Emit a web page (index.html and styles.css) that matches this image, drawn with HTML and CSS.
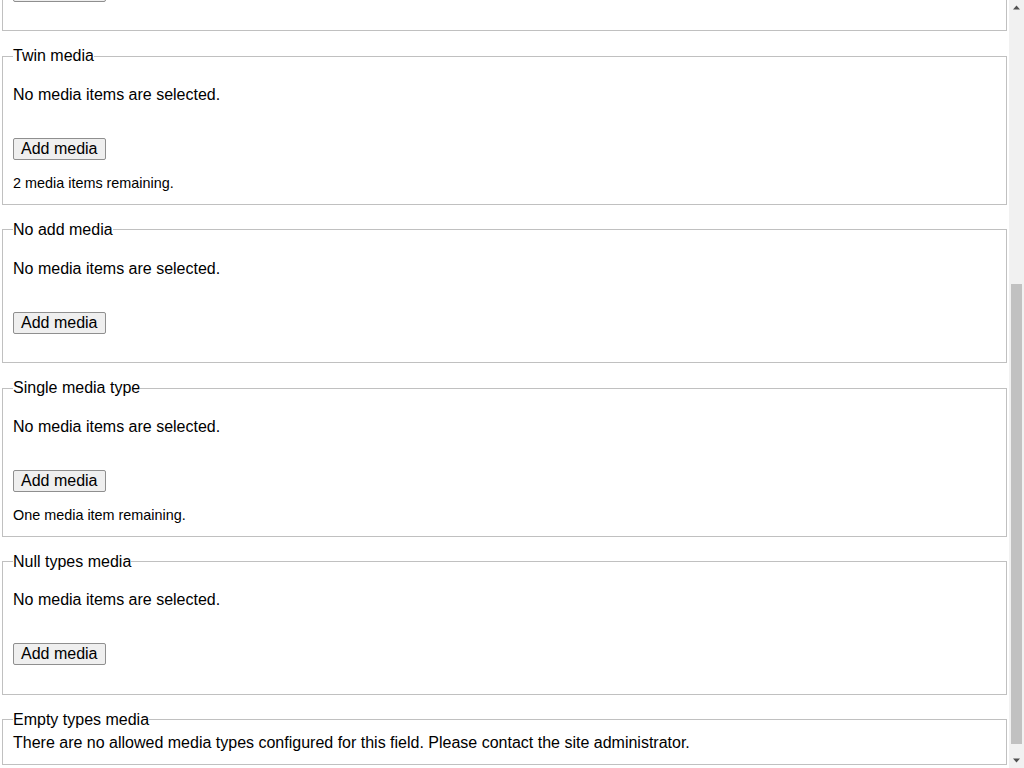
FILE: index.html
```html
<!DOCTYPE html>
<html lang="en">
<head>
<meta charset="utf-8">
<title>Media library widget</title>
<link rel="stylesheet" href="styles.css">
</head>
<body>
<form class="page">
  <div class="form-item">
    <fieldset class="field">
      <legend>Unlimited media</legend>
      <p class="empty">No media items are selected.</p>
      <div class="actions"><button type="button" class="btn">Add media</button></div>
    </fieldset>
  </div>
  <div class="form-item">
    <fieldset class="field">
      <legend>Unlimited media</legend>
      <p class="empty">No media items are selected.</p>
      <div class="actions"><button type="button" class="btn">Add media</button></div>
    </fieldset>
  </div>
  <div class="form-item">
    <fieldset class="field">
      <legend>Other media</legend>
      <p class="empty">No media items are selected.</p>
      <div class="actions"><button type="button" class="btn">Add media</button></div>
    </fieldset>
  </div>
  <div class="form-item">
    <fieldset class="field">
      <legend>Twin media</legend>
      <p class="empty">No media items are selected.</p>
      <div class="actions"><button type="button" class="btn">Add media</button></div>
      <div class="description">2 media items remaining.</div>
    </fieldset>
  </div>
  <div class="form-item">
    <fieldset class="field">
      <legend>No add media</legend>
      <p class="empty">No media items are selected.</p>
      <div class="actions"><button type="button" class="btn">Add media</button></div>
    </fieldset>
  </div>
  <div class="form-item">
    <fieldset class="field">
      <legend>Single media type</legend>
      <p class="empty">No media items are selected.</p>
      <div class="actions"><button type="button" class="btn">Add media</button></div>
      <div class="description">One media item remaining.</div>
    </fieldset>
  </div>
  <div class="form-item">
    <fieldset class="field">
      <legend>Null types media</legend>
      <p class="empty">No media items are selected.</p>
      <div class="actions"><button type="button" class="btn">Add media</button></div>
    </fieldset>
  </div>
  <div class="form-item last">
    <fieldset class="field">
      <legend>Empty types media</legend>
      <div class="notice">There are no allowed media types configured for this field. Please contact the site administrator.</div>
    </fieldset>
  </div>
</form>
<div class="scrollbar" aria-hidden="true">
  <div class="sb-arrow">
    <svg width="15" height="15" viewBox="0 0 15 15"><path d="M4 9.5 L7.5 5.5 L11 9.5 Z" fill="#505050"/></svg>
  </div>
  <div class="sb-track"><div class="sb-thumb"></div></div>
  <div class="sb-arrow">
    <svg width="15" height="15" viewBox="0 0 15 15"><path d="M4 5.5 L7.5 9.5 L11 5.5 Z" fill="#505050"/></svg>
  </div>
</div>
<script src="script.js"></script>
</body>
</html>
```

FILE: styles.css
```css
html, body {
  margin: 0;
  padding: 0;
}
body {
  font-family: "Liberation Sans", Arial, sans-serif;
  font-size: 16px;
  color: #000;
  background: #fff;
}
.page {
  display: flow-root;
  margin-right: 15px;
  padding-bottom: 3px;
}
.form-item {
  margin: 16px 0;
}
.form-item.last {
  margin-bottom: 0;
}
.field {
  border: 1px solid #c0c0c0;
  margin: 0 2px;
  padding: 5.6px 10px 12px;
  min-width: 0;
}
.field legend {
  padding: 0;
  border: 0;
}
.empty {
  margin: 15px 0 16px;
}
.actions {
  margin: 34px 0 16.5px;
}
.btn {
  font-family: "Liberation Sans", Arial, sans-serif;
  font-size: 16px;
  line-height: 18px;
  color: #000;
  background: #efefef;
  border: 1px solid #8f8f8f;
  border-radius: 2px;
  padding: 1px 7px;
  margin: 0;
}
.description {
  font-size: 14.4px;
  line-height: 15.6px;
}
.notice {
  margin: 0;
}

/* overlay scrollbar drawn over the page's right edge */
.scrollbar {
  position: fixed;
  top: 0;
  right: 0;
  width: 15px;
  height: 100vh;
  background: #f1f1f1;
  display: flex;
  flex-direction: column;
}
.sb-arrow {
  height: 15px;
  flex: none;
}
.sb-arrow svg {
  display: block;
}
.sb-track {
  flex: 1;
  display: flex;
  flex-direction: column;
  justify-content: flex-end;
  padding: 0 2px 9px;
}
.sb-thumb {
  height: 460px;
  background: #c1c1c1;
}
```

FILE: script.js
```js
window.scrollTo(0, document.documentElement.scrollHeight);
```
